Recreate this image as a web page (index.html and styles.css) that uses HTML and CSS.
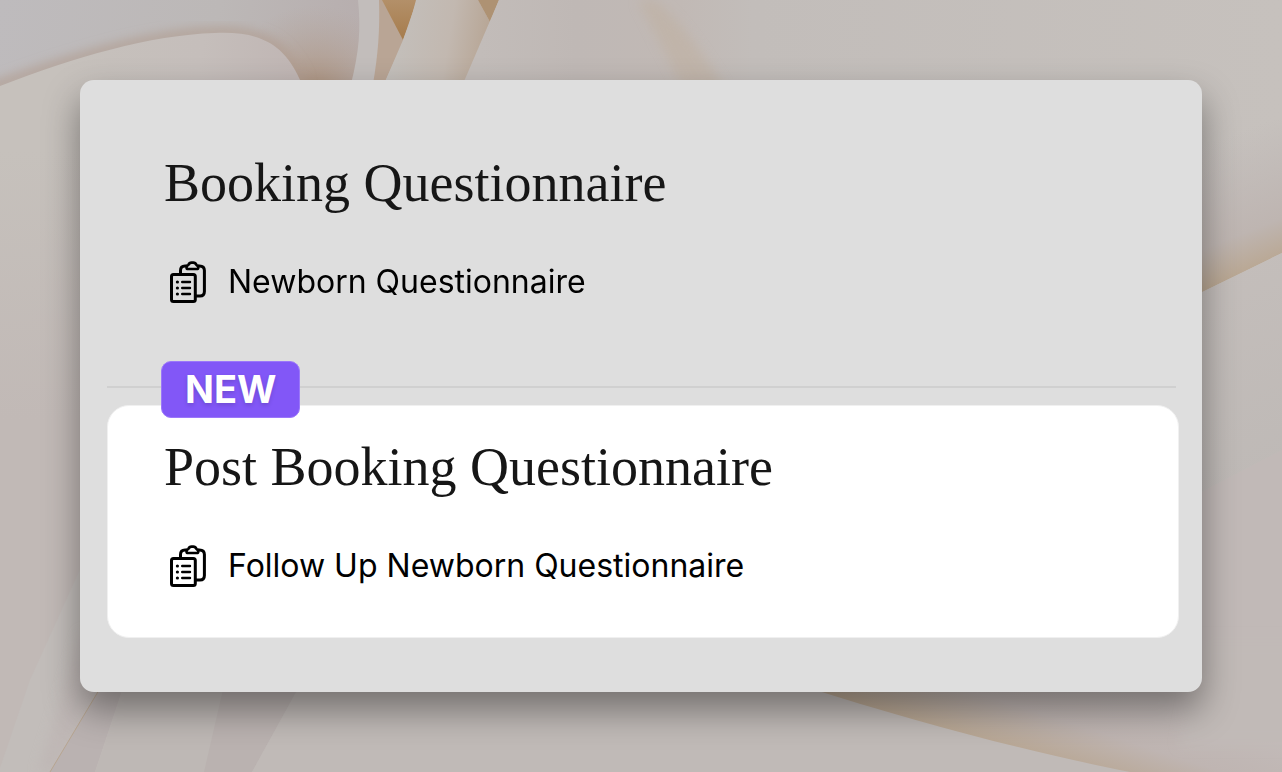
FILE: index.html
```html
<!DOCTYPE html>
<html lang="en">
<head>
    <meta charset="UTF-8">
    <meta name="viewport" content="width=device-width, initial-scale=1.0">
    <title>Questionnaires</title>
    <link rel="stylesheet" href="styles.css">
</head>
<body>
    <svg class="backdrop" viewBox="0 0 1282 772" preserveAspectRatio="xMidYMid slice" aria-hidden="true">
        <defs>
            <linearGradient id="sky" gradientUnits="userSpaceOnUse" x1="0" y1="0" x2="350" y2="80">
                <stop offset="0" stop-color="#bebbbd"/>
                <stop offset="0.6" stop-color="#bcb8b7"/>
                <stop offset="1" stop-color="#b7aeae"/>
            </linearGradient>
            <radialGradient id="glow" gradientUnits="userSpaceOnUse" cx="315" cy="95" r="90">
                <stop offset="0" stop-color="#ac9079"/>
                <stop offset="1" stop-color="#b5a59b" stop-opacity="0"/>
            </radialGradient>
            <linearGradient id="petal" gradientUnits="userSpaceOnUse" x1="60" y1="60" x2="290" y2="90">
                <stop offset="0" stop-color="#c6c1bc"/>
                <stop offset="0.6" stop-color="#c5bebb"/>
                <stop offset="1" stop-color="#c0b6b4"/>
            </linearGradient>
            <linearGradient id="leftSide" gradientUnits="userSpaceOnUse" x1="0" y1="150" x2="0" y2="420">
                <stop offset="0" stop-color="#c1b9b6" stop-opacity="0"/>
                <stop offset="1" stop-color="#c1b9b6"/>
            </linearGradient>
            <linearGradient id="gold" x1="0" y1="0" x2="0" y2="1">
                <stop offset="0" stop-color="#b39069"/>
                <stop offset="1" stop-color="#a67c4c"/>
            </linearGradient>
            <linearGradient id="fold" gradientUnits="userSpaceOnUse" x1="395" y1="30" x2="485" y2="45">
                <stop offset="0" stop-color="#c3bfbb"/>
                <stop offset="0.6" stop-color="#c2b8b0"/>
                <stop offset="1" stop-color="#b8a797"/>
            </linearGradient>
            <linearGradient id="topRight" gradientUnits="userSpaceOnUse" x1="480" y1="0" x2="1282" y2="0">
                <stop offset="0" stop-color="#c2bcb9"/>
                <stop offset="0.12" stop-color="#bfb8b5"/>
                <stop offset="0.25" stop-color="#c1b9b5"/>
                <stop offset="0.34" stop-color="#c2bdba"/>
                <stop offset="1" stop-color="#c6c1bd"/>
            </linearGradient>
            <linearGradient id="rightShade" gradientUnits="userSpaceOnUse" x1="1192" y1="150" x2="1242" y2="278">
                <stop offset="0" stop-color="#bdb5b4" stop-opacity="0"/>
                <stop offset="0.7" stop-color="#beb5b1"/>
                <stop offset="1" stop-color="#b9a690"/>
            </linearGradient>
            <linearGradient id="rightLow" gradientUnits="userSpaceOnUse" x1="1200" y1="260" x2="1282" y2="480">
                <stop offset="0" stop-color="#c4bebb"/>
                <stop offset="1" stop-color="#beb9b6"/>
            </linearGradient>
            <linearGradient id="bottomGold" gradientUnits="userSpaceOnUse" x1="1040" y1="665" x2="1012" y2="752">
                <stop offset="0" stop-color="#c2bab8"/>
                <stop offset="0.5" stop-color="#bfb5b2"/>
                <stop offset="1" stop-color="#b8a692"/>
            </linearGradient>
            <filter id="soft" x="-20%" y="-20%" width="140%" height="140%">
                <feGaussianBlur stdDeviation="6"/>
            </filter>
        </defs>
        <rect width="1282" height="772" fill="#c2bcb9"/>

        <!-- top left -->
        <path d="M0 0H365V90H0Z" fill="url(#sky)"/>
        <path d="M200 0H365V90H200Z" fill="url(#glow)"/>
        <path d="M-20 92C75 57 150 35 215 33C265 31 286 47 302 84" fill="none" stroke="#b09b8e" stroke-width="8" filter="url(#soft)"/>
        <path d="M0 86C75 57 150 35 215 33C265 31 286 47 302 84V430H0Z" fill="url(#petal)"/>
        <path d="M0 150H90V772H0Z" fill="url(#leftSide)"/>
        <path d="M358 0H379C380 30 378 55 373 84H351C359 52 361 30 358 0Z" fill="#c2bdbb"/>
        <path d="M379 0H386L404 40L384 84H373C378 55 380 30 379 0Z" fill="#b9a595"/>
        <path d="M382 0H417L403 40Z" fill="url(#gold)"/>
        <path d="M416 0H478L490 22L464 84H384L403 40Q410 24 416 0Z" fill="url(#fold)"/>
        <path d="M478 0H499L490 22Z" fill="#ae9273"/>

        <!-- right side -->
        <path d="M499 0H1282V300H370Z" fill="url(#topRight)"/>
        <path d="M638 0L684 90H725Q690 30 655 0Z" fill="#c0b1a2" filter="url(#soft)" opacity="0.6"/>
        <path d="M1190 120H1282V253L1190 298Z" fill="url(#rightShade)"/>
        <path d="M1190 298L1282 253V450L1190 498Z" fill="url(#rightLow)"/>
        <path d="M1190 498L1282 450V772H1190Z" fill="#c1b9b7"/>

        <!-- bottom left -->
        <path d="M82 565L30 680L0 768V772H60L110 680Z" fill="#c2bdba"/>
        <path d="M82 630L38 772H55L110 680Z" fill="#bdb4b2" filter="url(#soft)" opacity="0.6"/>
        <path d="M102 685L50 772H95L124 685Z" fill="#bab2b1"/>
        <path d="M102 685L50 772" stroke="#b7a591" stroke-width="1"/>
        <path d="M124 685L95 772H260L304 685Z" fill="#beb8b5"/>
        <path d="M224 685L204 772H252L300 685Z" fill="#bab2b0"/>
        <path d="M300 685L252 772H1150L820 685Z" fill="#c0bab7"/>
        <path d="M800 685H1282V772H1130C1040 754 930 727 800 685Z" fill="url(#bottomGold)"/>
        <path d="M1200 640H1320V745H1180Z" fill="#c1bab7" filter="url(#soft)"/>
    </svg>

    <svg class="sprite" aria-hidden="true">
        <symbol id="clipboard" viewBox="0 0 40 44">
            <g fill="none" stroke="currentColor" stroke-width="3" stroke-linecap="round" stroke-linejoin="round">
                <rect x="3.5" y="14.5" width="23.8" height="27" rx="2"/>
                <path d="M12.5 14V10.5Q12.5 6 17 6H18.5M30 6H31.5Q36.4 6 36.4 10.5V31.5Q36.4 36 32 36H28"/>
                <path d="M18.5 7.4Q18.5 5.6 20.3 5Q21.3 2.6 23.5 2.6H25.3Q27.5 2.6 28.5 5Q30.3 5.6 30.3 7.4Q30.3 9 28.7 9H20.1Q18.5 9 18.5 7.4Z" stroke-width="2.6"/>
                <path d="M14.2 22H22M14.2 28H22M14.2 34H22" stroke-width="2.4"/>
            </g>
            <g fill="currentColor">
                <circle cx="9.4" cy="22" r="1.6"/>
                <circle cx="9.4" cy="28" r="1.6"/>
                <circle cx="9.4" cy="34" r="1.6"/>
            </g>
        </symbol>
    </svg>

    <main class="card">
        <section class="group">
            <h2 class="group-title">Booking Questionnaire</h2>
            <div class="item">
                <svg class="item-icon" aria-hidden="true"><use href="#clipboard"/></svg>
                <span>Newborn Questionnaire</span>
            </div>
        </section>

        <section class="group group-new">
            <span class="badge">NEW</span>
            <h2 class="group-title">Post Booking Questionnaire</h2>
            <div class="item">
                <svg class="item-icon" aria-hidden="true"><use href="#clipboard"/></svg>
                <span>Follow Up Newborn Questionnaire</span>
            </div>
        </section>
    </main>
</body>
</html>
```
FILE: styles.css
```css
* {
    margin: 0;
    padding: 0;
    box-sizing: border-box;
}

body {
    min-height: 100vh;
    padding: 80px;
    font-family: Inter, "Liberation Sans", sans-serif;
    color: #000;
    background: #c2bcb9;
}

.backdrop {
    position: fixed;
    inset: 0;
    width: 100%;
    height: 100%;
    z-index: -1;
}

.sprite {
    position: absolute;
    width: 0;
    height: 0;
}

.card {
    padding: 0 23px 54px 27px;
    background: #dedede;
    border-radius: 14px;
    box-shadow: 0 18px 36px rgba(0, 0, 0, 0.4);
}

.group {
    padding: 71px 57px 76px;
    margin-right: 3px;
    border-bottom: 2px solid #d0d0d0;
}

.group-new {
    position: relative;
    margin: 17px 0 0;
    padding: 29px 56px 43px;
    background: #fff;
    border: 1px solid #f0f0f0;
    border-radius: 22px;
}

.group-title {
    margin-bottom: 39px;
    font-family: "Liberation Serif", serif;
    font-size: 54px;
    font-weight: 400;
    line-height: 64px;
    color: #161616;
}

.item {
    display: flex;
    align-items: center;
    gap: 20px;
    font-size: 32px;
    line-height: 56px;
}

.item-icon {
    flex: none;
    width: 40px;
    height: 44px;
    margin-left: 4px;
}

.badge {
    position: absolute;
    top: -45px;
    left: 53px;
    padding: 0 23px;
    border: 1px solid #9b77fa;
    border-radius: 10px;
    background: #8257f7;
    color: #fff;
    font-size: 38px;
    font-weight: 700;
    line-height: 55px;
    text-shadow: 0 2px 4px rgba(0, 0, 0, 0.15);
}

@media (max-width: 768px) {
    body {
        padding: 24px;
    }

    .group-title {
        font-size: 36px;
        line-height: 44px;
    }

    .item {
        font-size: 24px;
        line-height: 36px;
    }
}
```
